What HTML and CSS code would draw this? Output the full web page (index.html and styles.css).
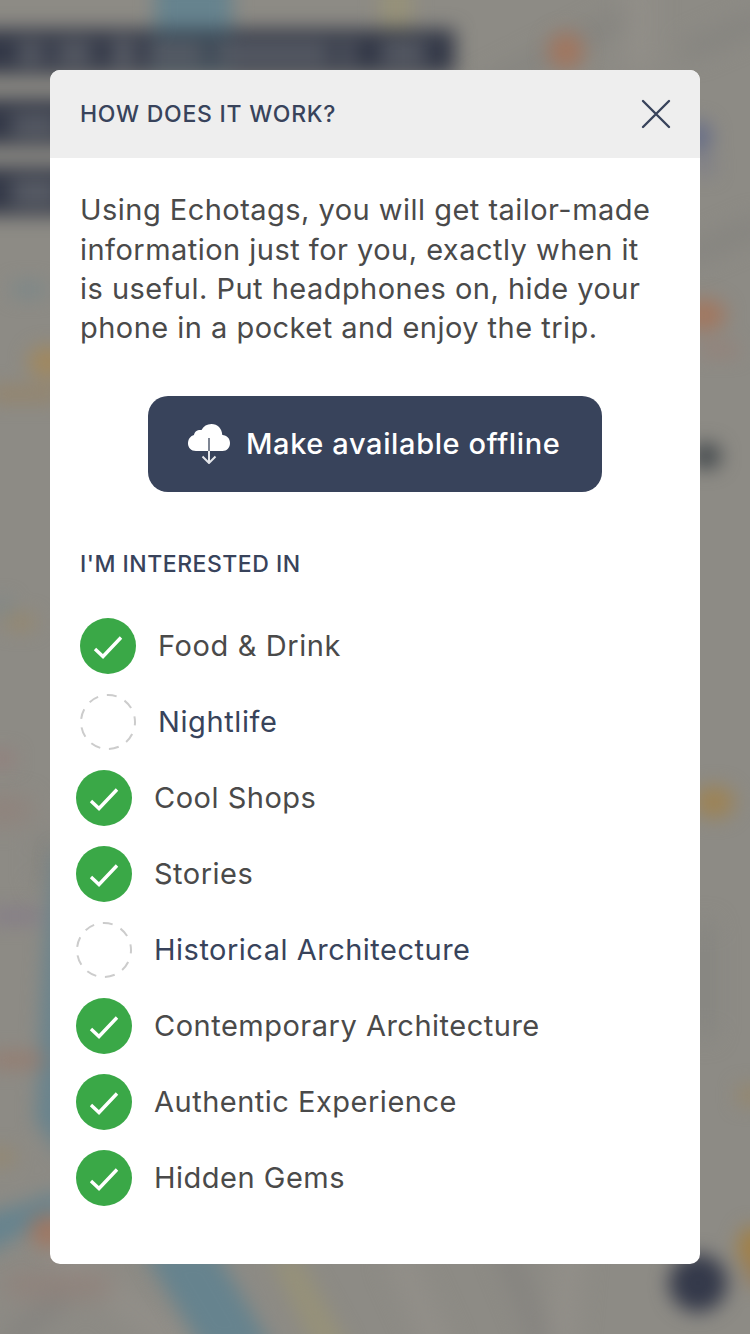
FILE: index.html
```html
<!DOCTYPE html>
<html lang="en">
<head>
<meta charset="utf-8">
<title>How does it work?</title>
<link rel="stylesheet" href="styles.css">
</head>
<body>
<svg class="map" viewBox="0 0 750 1334" aria-hidden="true">
  <defs>
    <filter id="soft" filterUnits="userSpaceOnUse" x="-60" y="-60" width="870" height="1454" color-interpolation-filters="sRGB"><feGaussianBlur stdDeviation="9.5"/></filter>
    <filter id="softer" filterUnits="userSpaceOnUse" x="-60" y="-60" width="870" height="1454" color-interpolation-filters="sRGB"><feGaussianBlur stdDeviation="12"/></filter>
  </defs>
  <rect width="750" height="1334" fill="#8d8b85"/>
  <g filter="url(#softer)" fill="none" stroke-linecap="round">
    <path d="M480 90L620 20M690 50L760 20M690 255L760 225" stroke="#83827e" stroke-width="14"/>
    <path d="M640 -20V60M60 1250L210 1370M400 1260L440 1350M570 1250L560 1350" stroke="#928f89" stroke-width="26"/>
    <path d="M10 1340L60 1300M505 1250L545 1350" stroke="#82807d" stroke-width="14"/>
    <path d="M-10 810H20M15 1285H100" stroke="#90827b" stroke-width="24"/>
    <path d="M45 840V880M705 930V1030" stroke="#83837f" stroke-width="16"/>
  </g>
  <g filter="url(#soft)">
    <path d="M155 -20H232V40H155ZM56 850C48 900 42 990 40 1065L36 1120L65 1160V850ZM-20 1215L20 1205L62 1190V1215L20 1235L-20 1258ZM142 1250H215L274 1350H203Z" fill="#66838e"/>
    <path d="M380 -20H412V35H380ZM270 1258L300 1258L350 1350H315Z" fill="#969179"/>
    <ellipse cx="566" cy="51" rx="18" ry="19" fill="#a1765f"/>
    <ellipse cx="704" cy="315" rx="22" ry="16" fill="#a2775f"/>
    <path d="M700 345H738V355H700Z" fill="#987f75"/>
    <ellipse cx="48" cy="1231" rx="18" ry="17" fill="#a07762"/>
    <path d="M-10 1053H45V1067H-10Z" fill="#967b6e"/>
    <ellipse cx="48" cy="362" rx="20" ry="16" fill="#a1885e"/>
    <path d="M-10 387H60V401H-10Z" fill="#968468"/>
    <path d="M5 615H35V629H5ZM-10 1150H14V1164H-10ZM738 1086H765V1104H738Z" fill="#96876b"/>
    <path d="M12 283H45V296H12ZM-5 600H10V612H-5Z" fill="#78878a"/>
    <path d="M-10 753H14V765H-10Z" fill="#967c79"/>
    <path d="M-10 910H40V922H-10Z" fill="#837989"/>
    <ellipse cx="714" cy="802" rx="21" ry="16" fill="#9d8355"/>
    <ellipse cx="753" cy="1248" rx="15" ry="22" fill="#a28045"/>
    <path d="M748 1260H765V1285H748Z" fill="#9a7a50"/>
    <ellipse cx="698" cy="137" rx="14" ry="16" fill="#666d88"/>
    <path d="M695 158H714V174H695Z" fill="#7c7d88"/>
    <ellipse cx="706" cy="456" rx="15" ry="13" fill="#42484c"/>
    <circle cx="698" cy="1283" r="29" fill="#34394a"/>
    <path d="M-30 29H455V74H-30ZM-30 99H120V145H-30ZM-30 167H120V215H-30Z" fill="#333847"/>
    <path d="M150 29H232V74H150Z" fill="#384654"/>
    <path d="M18 43H44V63H18ZM57 43H92V63H57ZM112 40H135V66H112ZM148 43H204V63H148ZM216 43H330V63H216ZM340 43H354V63H340ZM382 43H425V63H382ZM12 115H60V135H12ZM12 180H60V204H12Z" fill="#5b5f68"/>
  </g>
</svg>

<main class="modal">
  <header class="modal-header">
    <h1 class="title">HOW DOES IT WORK?</h1>
    <svg class="close" viewBox="0 0 30 30" role="img" aria-label="Close"><path d="M2 2L28 28M28 2L2 28"/></svg>
  </header>
  <section class="content">
    <p class="intro">Using Echotags, you will get tailor-made<br>information just for you, exactly when it<br>is useful. Put headphones on, hide your<br>phone in a pocket and enjoy the trip.</p>
    <div class="offline">
      <svg class="cloud" viewBox="0 0 42 40" aria-hidden="true">
        <path class="cloud-fill" d="M8 27C3 27 0 23.5 0 19.5C0 15 2.5 12 6 11C6.500 7.500 9.500 5.500 13.500 6C15.500 2 19 0 23.500 0C29.500 0 34 4.500 34.300 11C39 11.500 42 14.500 42 19C42 23.500 39 27 34.500 27Z"/>
        <path class="arrow-stem" d="M21 14V27"/>
        <path class="arrow-head" d="M21 27V39M14.500 32.500L21 39L27.500 32.500"/>
      </svg>
      <span class="label">Make available offline</span>
    </div>
    <h2 class="title interests-title">I'M INTERESTED IN</h2>
    <ul class="interests">
      <li class="item inset"><svg class="mark" viewBox="0 0 56 56"><circle class="on" cx="28" cy="28" r="28"/><path class="tick" d="M15 31L23 38.500L41 19.500"/></svg><span class="label">Food &amp; Drink</span></li>
      <li class="item inset off"><svg class="mark" viewBox="0 0 56 56"><circle class="ring" cx="28" cy="28" r="27"/></svg><span class="label">Nightlife</span></li>
      <li class="item"><svg class="mark" viewBox="0 0 56 56"><circle class="on" cx="28" cy="28" r="28"/><path class="tick" d="M15 31L23 38.500L41 19.500"/></svg><span class="label">Cool Shops</span></li>
      <li class="item"><svg class="mark" viewBox="0 0 56 56"><circle class="on" cx="28" cy="28" r="28"/><path class="tick" d="M15 31L23 38.500L41 19.500"/></svg><span class="label">Stories</span></li>
      <li class="item off"><svg class="mark" viewBox="0 0 56 56"><circle class="ring" cx="28" cy="28" r="27"/></svg><span class="label">Historical Architecture</span></li>
      <li class="item"><svg class="mark" viewBox="0 0 56 56"><circle class="on" cx="28" cy="28" r="28"/><path class="tick" d="M15 31L23 38.500L41 19.500"/></svg><span class="label">Contemporary Architecture</span></li>
      <li class="item"><svg class="mark" viewBox="0 0 56 56"><circle class="on" cx="28" cy="28" r="28"/><path class="tick" d="M15 31L23 38.500L41 19.500"/></svg><span class="label">Authentic Experience</span></li>
      <li class="item"><svg class="mark" viewBox="0 0 56 56"><circle class="on" cx="28" cy="28" r="28"/><path class="tick" d="M15 31L23 38.500L41 19.500"/></svg><span class="label">Hidden Gems</span></li>
    </ul>
  </section>
</main>
</body>
</html>
```
FILE: styles.css
```css
* { box-sizing: border-box; }
body {
  margin: 0;
  height: 1334px;
  padding: 70px 50px;
  overflow: hidden;
  background: #8d8b85;
  color: #4a4a4a;
  font-family: Inter, "Liberation Sans", sans-serif;
  font-size: 29px;
  letter-spacing: 0.5px;
}
.map { position: absolute; top: 0; left: 0; width: 750px; height: 1334px; }
.modal {
  position: relative;
  height: 1194px;
  border-radius: 10px;
  overflow: hidden;
  background: #fff;
}
.modal-header {
  display: flex;
  align-items: center;
  justify-content: space-between;
  height: 88px;
  padding: 0 29px 0 30px;
  background: #eee;
}
.title {
  margin: 0;
  color: #38435b;
  font-size: 23px;
  font-weight: 500;
  line-height: 30px;
  letter-spacing: 0.74px;
}
.close { width: 30px; height: 30px; fill: none; stroke: #38435b; stroke-width: 2.4; stroke-linecap: round; }
.content { padding: 32.300px 26px 0; }
.intro { margin: 0 4px; line-height: 39.300px; letter-spacing: 0.47px; white-space: nowrap; }
.offline {
  display: flex;
  align-items: center;
  gap: 16px;
  width: 454px;
  height: 96px;
  margin: 48.500px auto 0;
  padding-left: 40px;
  border-radius: 20px;
  background: #38435b;
  color: #fff;
  font-weight: 500;
  letter-spacing: 0.62px;
  white-space: nowrap;
}
.label { line-height: 36px; }
.cloud { flex: none; width: 42px; height: 40px; fill: none; }
.cloud-fill { fill: #fff; }
.arrow-stem { stroke: #7e8593; stroke-width: 2; }
.arrow-head { stroke: #e4e6ea; stroke-width: 2; }
.interests-title { margin: 57px 4px 0; letter-spacing: 0.5px; }
.interests { display: grid; gap: 20px; margin: 39px 0 0; padding: 0; list-style: none; }
.item { display: flex; align-items: center; gap: 22px; height: 56px; white-space: nowrap; }
.inset { padding-left: 4px; letter-spacing: 0.6px; }
.off { color: #38435b; }
.mark { flex: none; width: 56px; height: 56px; fill: none; }
.on { fill: #3aa847; }
.tick { stroke: #fff; stroke-width: 3.4; }
.ring { stroke: #ccc; stroke-width: 2; stroke-dasharray: 10 8.850; stroke-dashoffset: 6.400; }
```
